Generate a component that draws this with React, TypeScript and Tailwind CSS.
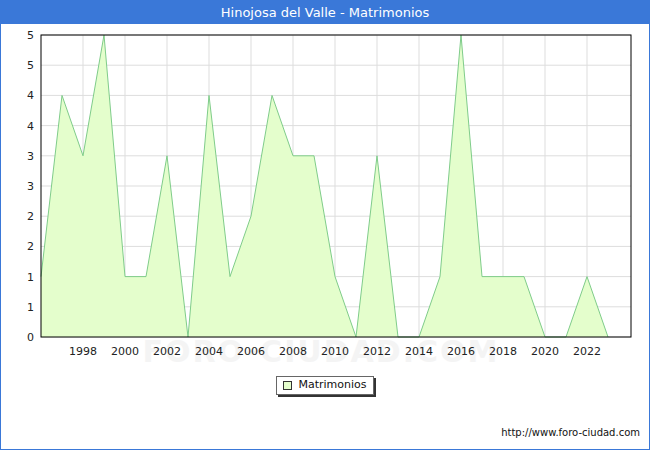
const data = [1, 4, 3, 5, 1, 1, 3, 0, 4, 1, 2, 4, 3, 3, 1, 0, 3, 0, 0, 1, 5, 1, 1, 1, 0, 0, 1, 0];

const X0 = 40;
const Y0 = 337;
const SX = 21;
const SY = 60.4;

export default function App() {
  const pts = data.map((v, i) => `${X0 + i * SX},${Y0 - v * SY}`).join(" ");
  const area = `${X0},${Y0} ${pts} ${X0 + (data.length - 1) * SX},${Y0}`;
  const yLabels = ["0", "1", "1", "2", "2", "3", "3", "4", "4", "5", "5"];
  const years = [1998, 2000, 2002, 2004, 2006, 2008, 2010, 2012, 2014, 2016, 2018, 2020, 2022];

  return (
    <div className="w-[650px] h-[450px] bg-white border border-[#3a78d8] flex flex-col" style={{ fontFamily: "Verdana, 'DejaVu Sans', sans-serif" }}>
      <div className="h-[23px] bg-[#3a78d8] text-white text-[13px] flex items-center justify-center shrink-0">
        Hinojosa del Valle - Matrimonios
      </div>
      <div className="relative h-[340px]">
        <svg width="648" height="340" viewBox="0 24 648 340" className="block">
          <text x="320" y="362" textAnchor="middle" fontSize="30" fill="#f4f4f4" fontWeight="bold" letterSpacing="2">FORO-CIUDAD.COM</text>
          {yLabels.map((l, i) => {
            const y = Y0 - i * 30.2;
            return (
              <g key={i}>
                <line x1={X0} x2={630} y1={y} y2={y} stroke="#dddddd" strokeWidth="1" />
                <text x={33} y={y + 4} textAnchor="end" fontSize="11" fill="#222">{l}</text>
              </g>
            );
          })}
          {years.map((yr) => {
            const x = X0 + (yr - 1996) * SX;
            return (
              <g key={yr}>
                <line x1={x} x2={x} y1={35} y2={Y0} stroke="#dddddd" strokeWidth="1" />
                <text x={x} y={355} textAnchor="middle" fontSize="11" fill="#222">{yr}</text>
              </g>
            );
          })}
          <polygon points={area} fill="#e4fecc" />
          <polyline points={pts} fill="none" stroke="#7fcc8a" strokeWidth="1" />
          <rect x={X0} y={35} width={590} height={302} fill="none" stroke="#000" strokeWidth="1" />
        </svg>
      </div>
      <div className="flex justify-center mt-[12px]">
        <div className="flex items-center gap-[6px] border border-[#666] bg-white px-[6px] h-[19px] text-[11px] text-[#111] shadow-[2px_2px_0_#333]">
          <span className="w-[9px] h-[9px] border border-[#333] bg-[#e4fecc]" />
          Matrimonios
        </div>
      </div>
      <div className="flex-1 flex items-end justify-end pr-[9px] pb-[9px] text-[10px] text-[#111]">
        http://www.foro-ciudad.com
      </div>
    </div>
  );
}
